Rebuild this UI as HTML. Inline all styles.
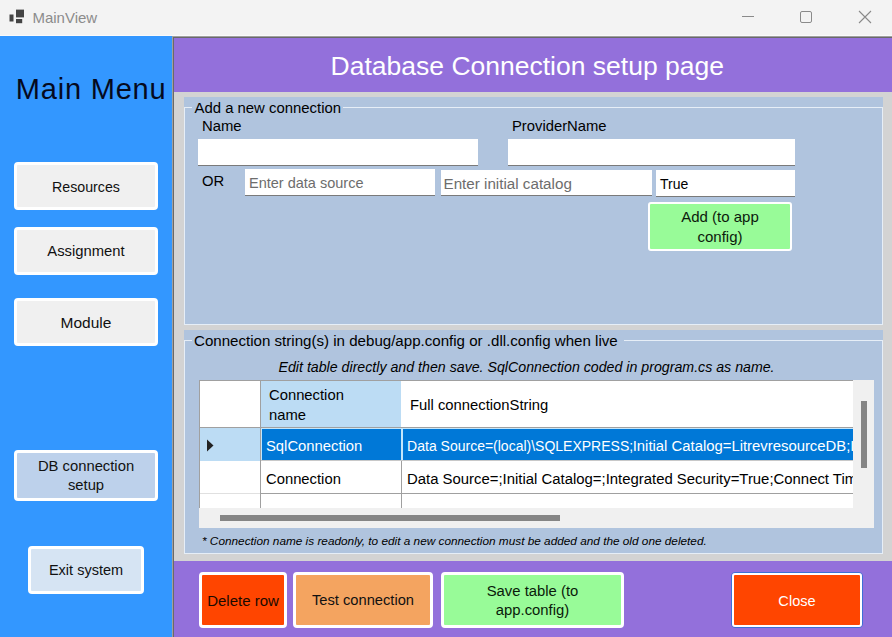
<!DOCTYPE html>
<html><head><meta charset="utf-8">
<style>
*{margin:0;padding:0;box-sizing:border-box}
html,body{width:892px;height:637px;overflow:hidden;background:#f0f0f0;font-family:"Liberation Sans",sans-serif;color:#000}
.a{position:absolute}
.t{position:absolute;white-space:nowrap;line-height:1}
.c{text-align:center}
#tb{left:0;top:0;width:892px;height:36px;background:#f3f3f3}
#lp{left:0;top:36px;width:172px;height:601px;background:#3397ff}
#rp{left:172px;top:36px;width:720px;height:601px;background:#d3d3d3;border-left:1px solid #a0a0a0;border-top:1px solid #a0a0a0}
#rpi{left:173px;top:37px;width:719px;height:600px;border-left:1px solid #696969;border-top:1px solid #696969}
#hdr{left:174px;top:38px;width:718px;height:54px;background:#9370db}
#ftr{left:174px;top:561px;width:718px;height:76px;background:#9370db}
.btn{position:absolute;border:3px solid #fff;border-radius:4px;background:#f0f0f0}
.grp{position:absolute;left:184px;width:699px;background:#b0c4de}
.gl{position:absolute;background:#e6eef7}
.tbx{position:absolute;background:#fff;border-bottom:1px solid #7a7a7a}
.ph{color:#6d6d6d}
</style></head><body>
<!-- title bar -->
<div class="a" id="tb"></div>
<div class="a" style="left:0;top:35px;width:892px;height:1px;background:#fafafa"></div>
<svg class="a" style="left:0;top:0" width="892" height="36">
  <rect x="9.5" y="14.5" width="4" height="7" fill="#444"/>
  <rect x="16" y="9.6" width="8" height="7.8" fill="#444"/>
  <rect x="16" y="19" width="6.2" height="4.2" fill="#444"/>
  <line x1="742" y1="16.5" x2="754" y2="16.5" stroke="#8a8a8a" stroke-width="1"/>
  <rect x="800.5" y="11.5" width="11" height="11" rx="1.5" fill="none" stroke="#8a8a8a" stroke-width="1"/>
  <path d="M859 11 L871 23 M871 11 L859 23" stroke="#8a8a8a" stroke-width="1.1"/>
</svg>
<div class="t" style="left:32.4px;top:10.4px;font-size:15px;color:#8c8c8c">MainView</div>

<!-- left panel -->
<div class="a" id="lp"></div>
<div class="t" style="left:15.8px;top:75.2px;font-size:29px;letter-spacing:0.8px;color:#050a1e">Main Menu</div>
<div class="btn" style="left:14px;top:162px;width:144px;height:48px"></div>
<div class="t c" style="left:14px;width:144px;top:179.8px;font-size:14.2px;color:#111">Resources</div>
<div class="btn" style="left:14px;top:227px;width:144px;height:48px"></div>
<div class="t c" style="left:14px;width:144px;top:244px;font-size:14.8px;color:#111">Assignment</div>
<div class="btn" style="left:14px;top:298px;width:144px;height:48px"></div>
<div class="t c" style="left:14px;width:144px;top:315.2px;font-size:15.5px;color:#111">Module</div>
<div class="btn" style="left:14px;top:450px;width:144px;height:51px;background:#bdd1eb"></div>
<div class="t c" style="left:14px;width:144px;top:459px;font-size:14.8px;color:#111">DB connection</div>
<div class="t c" style="left:14px;width:144px;top:478px;font-size:14.8px;color:#111">setup</div>
<div class="btn" style="left:28px;top:546px;width:116px;height:48px;background:#d6e4f3"></div>
<div class="t c" style="left:28px;width:116px;top:563.2px;font-size:14.5px;color:#111">Exit system</div>

<!-- right panel -->
<div class="a" id="rp"></div>
<div class="a" id="rpi"></div>
<div class="a" id="hdr"></div>
<div class="t" style="left:330.6px;top:52.6px;font-size:26.5px;color:#fff">Database Connection setup page</div>

<!-- group 1 -->
<div class="grp" style="top:97px;height:228px"></div>
<div class="gl" style="left:184px;top:107px;width:1px;height:218px"></div>
<div class="gl" style="left:184px;top:107px;width:8px;height:1px"></div>
<div class="gl" style="left:343px;top:107px;width:540px;height:1px"></div>
<div class="gl" style="left:882px;top:107px;width:1px;height:218px"></div>
<div class="gl" style="left:184px;top:324px;width:699px;height:1px"></div>
<div class="t" style="left:194.5px;top:100.5px;font-size:14.9px">Add a new connection</div>
<div class="t" style="left:202px;top:119.1px;font-size:14.85px">Name</div>
<div class="t" style="left:512px;top:119.1px;font-size:14.8px">ProviderName</div>
<div class="tbx" style="left:198px;top:139px;width:280px;height:27px"></div>
<div class="tbx" style="left:508px;top:139px;width:287px;height:27px"></div>
<div class="t" style="left:202px;top:174px;font-size:14.8px">OR</div>
<div class="tbx" style="left:245px;top:169px;width:190px;height:27px"></div>
<div class="t ph" style="left:249px;top:175.8px;font-size:14.5px">Enter data source</div>
<div class="tbx" style="left:441px;top:170px;width:211px;height:26px"></div>
<div class="t ph" style="left:443.5px;top:175.6px;font-size:15.2px">Enter initial catalog</div>
<div class="tbx" style="left:656px;top:170px;width:139px;height:27px"></div>
<div class="t" style="left:660px;top:177px;font-size:14px">True</div>
<div class="btn" style="left:648px;top:202px;width:144px;height:49px;background:#98fb98;border-width:2px;border-radius:3px"></div>
<div class="t c" style="left:648px;width:144px;top:208.8px;font-size:15px;color:#0c1a0c">Add (to app</div>
<div class="t c" style="left:648px;width:144px;top:228.7px;font-size:15px;color:#0c1a0c">config)</div>

<!-- group 2 -->
<div class="grp" style="top:330px;height:224px"></div>
<div class="gl" style="left:184px;top:340px;width:1px;height:214px"></div>
<div class="gl" style="left:184px;top:340px;width:8px;height:1px"></div>
<div class="gl" style="left:624px;top:340px;width:259px;height:1px"></div>
<div class="gl" style="left:882px;top:340px;width:1px;height:214px"></div>
<div class="gl" style="left:184px;top:553px;width:699px;height:1px"></div>
<div class="t" style="left:194px;top:333px;font-size:15.1px">Connection string(s) in debug/app.config or .dll.config when live</div>
<div class="t" style="left:278.5px;top:360px;font-size:14.2px;font-style:italic">Edit table directly and then save. SqlConnection coded in program.cs as name.</div>
<div class="t" style="left:202px;top:536px;font-size:11.8px;font-style:italic">* Connection name is readonly, to edit a new connection must be added and the old one deleted.</div>

<!-- DGV -->
<div class="a" style="left:199px;top:380px;width:675px;height:148px;background:#fff;border-left:1px solid #f0f0f0;border-top:1px solid #f0f0f0;overflow:hidden">
  <!-- origin (200,381) -->
  <div class="a" style="left:61px;top:0;width:140px;height:46px;background:#bcdcf4"></div>
  <div class="a" style="left:0;top:47px;width:60px;height:33px;background:#bcdcf4"></div>
  <!-- grid lines -->
  <div class="a" style="left:0;top:46px;width:660px;height:1px;background:#a0a0a0"></div>
  <div class="a" style="left:60px;top:0;width:1px;height:127px;background:#a0a0a0"></div>
  <div class="a" style="left:201px;top:46px;width:1px;height:81px;background:#a0a0a0"></div>
  <div class="a" style="left:61px;top:79px;width:600px;height:1px;background:#c8c8c8"></div>
  <div class="a" style="left:61px;top:112px;width:600px;height:1px;background:#a0a0a0"></div>
  <div class="a" style="left:0;top:112px;width:60px;height:1px;background:#e0e0e0"></div>
  <!-- selected row -->
  <div class="a" style="left:61px;top:47px;width:140px;height:32px;background:#0078d7;border-left:1px solid #c4e6fb;border-top:1px solid #c4e6fb"></div>
  <div class="a" style="left:201px;top:47px;width:470px;height:32px;background:#0078d7;border-left:2px solid #c4e6fb;border-top:1px solid #c4e6fb"></div>
  <svg class="a" style="left:6px;top:58px" width="10" height="14"><path d="M1 0.5 L7.5 6.5 L1 12.5 Z" fill="#222"/></svg>
  <!-- text -->
  <div class="t" style="left:69px;top:6.5px;font-size:14.8px">Connection</div>
  <div class="t" style="left:69px;top:26.8px;font-size:14.8px">name</div>
  <div class="t" style="left:210px;top:16.7px;font-size:14.8px">Full connectionString</div>
  <div class="t" style="left:66px;top:58px;font-size:14.8px;color:#fff">SqlConnection</div>
  <div class="t" style="left:207.1px;top:58.2px;font-size:14px;color:#fff">Data Source=(local)\SQLEXPRESS;</div>
  <div class="t" style="left:432.7px;top:57.5px;font-size:14.87px;color:#fff">Initial Catalog=LitrevresourceDB;Integrated Security=True</div>
  <div class="t" style="left:66px;top:90.7px;font-size:14.8px">Connection</div>
  <div class="t" style="left:207px;top:90.7px;font-size:14.9px">Data Source=;Initial Catalog=;Integrated Security=True;Connect Timeout=30</div>
  <!-- scrollbars -->
  <div class="a" style="left:653px;top:-1px;width:21px;height:148px;background:#f0f0f0"></div>
  <div class="a" style="left:661px;top:20px;width:6px;height:67px;background:#858585"></div>
  <div class="a" style="left:-1px;top:127px;width:675px;height:20px;background:#f0f0f0"></div>
    <div class="a" style="left:20px;top:134px;width:340px;height:6px;background:#858585"></div>
</div>

<div class="a" style="left:199px;top:380px;width:654px;height:1px;background:#a0a0a0"></div>
<div class="a" style="left:199px;top:380px;width:1px;height:128px;background:#a0a0a0"></div>
<!-- footer -->
<div class="a" id="ftr"></div>
<div class="btn" style="left:199px;top:572px;width:88px;height:56px;background:#ff4500"></div>
<div class="t c" style="left:199px;width:88px;top:592.5px;font-size:15px;color:#1a0a00">Delete row</div>
<div class="btn" style="left:293px;top:572px;width:140px;height:56px;background:#f4a460"></div>
<div class="t c" style="left:293px;width:140px;top:592.5px;font-size:14.7px;color:#111">Test connection</div>
<div class="btn" style="left:441px;top:572px;width:183px;height:56px;background:#98fb98"></div>
<div class="t c" style="left:441px;width:183px;top:583.8px;font-size:14.85px;color:#0a1a0a">Save table (to</div>
<div class="t c" style="left:441px;width:183px;top:602.8px;font-size:14.85px;color:#0a1a0a">app.config)</div>
<div class="a" style="left:731px;top:572px;width:132px;height:56px;border:1px solid #3c6fd6;border-radius:4px"></div>
<div class="btn" style="left:732px;top:573px;width:130px;height:54px;background:#ff4500;border-width:2px;border-radius:3px"></div>
<div class="t c" style="left:732px;width:130px;top:593.6px;font-size:14.6px;color:#fff">Close</div>
</body></html>
